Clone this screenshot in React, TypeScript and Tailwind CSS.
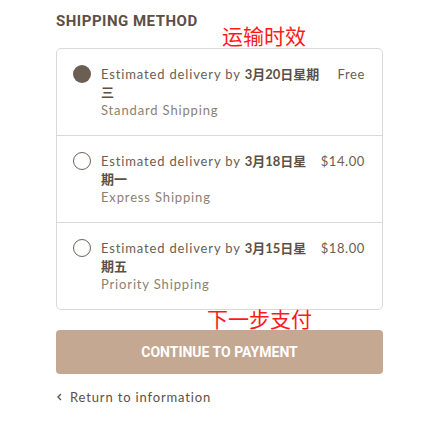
import React from "react";

const options = [
  { date: "3月20日星期三", name: "Standard Shipping", price: "Free", checked: true },
  { date: "3月18日星期一", name: "Express Shipping", price: "$14.00", checked: false },
  { date: "3月15日星期五", name: "Priority Shipping", price: "$18.00", checked: false },
];

const body = "font-['Lato','Noto_Sans_CJK_SC',sans-serif]";
const narrow = "font-['Roboto',sans-serif]";

export default function App() {
  return (
    <div className={`relative w-[445px] h-[422px] bg-white pl-[56px] pr-[62px] pt-[10px] ${body}`}>
      <h2 className={`${narrow} font-bold text-[15px] tracking-[0.5px] text-[#5b5046] leading-[22px]`}>
        SHIPPING METHOD
      </h2>
      <span className="absolute left-[222px] top-[22px] text-[21px] leading-[26px] text-[#ff1a1a] font-['Noto_Sans_CJK_SC',sans-serif]">
        运输时效
      </span>

      <div className="mt-[16px] border border-[#d9d9d9] rounded-[5px]">
        {options.map((o, i) => (
          <div
            key={o.name}
            className={`flex items-start pl-[16px] pr-[17px] pt-[16px] pb-[16px] ${i > 0 ? "border-t border-[#d9d9d9]" : ""}`}
          >
            <span
              className={`w-[18px] h-[18px] shrink-0 rounded-full ${
                o.checked ? "bg-[#6b5e52]" : "border-[1.5px] border-[#6b625a]"
              }`}
            />
            <div className="ml-[10px] flex-1 min-w-0 text-[13px] leading-[18px] tracking-[0.85px]">
              <p className="text-[#6b5e52]">
                Estimated delivery by <b className="font-bold tracking-normal text-[#5b5046]">{o.date}</b>
              </p>
              <p className="text-[#8c7f73]">{o.name}</p>
            </div>
            <span className="ml-[14px] text-[13px] leading-[18px] tracking-[0.6px] text-[#6b5e52]">{o.price}</span>
          </div>
        ))}
      </div>

      <span className="absolute left-[207px] top-[305px] text-[21px] leading-[26px] text-[#ff1a1a] font-['Noto_Sans_CJK_SC',sans-serif]">
        下一步支付
      </span>

      <button
        className={`mt-[20px] w-full h-[44px] rounded-[4px] bg-[#c5a892] text-white ${narrow} font-bold text-[14px] tracking-[0px]`}
      >
        CONTINUE TO PAYMENT
      </button>

      <a className="mt-[14px] flex items-center text-[13px] leading-[18px] tracking-[0.85px] text-[#5b5046]">
        <svg width="8" height="10" viewBox="0 0 8 10" className="mr-[6px]">
          <path d="M5 2 L2 5 L5 8" fill="none" stroke="#5b5046" strokeWidth="1.3" />
        </svg>
        Return to information
      </a>
    </div>
  );
}
